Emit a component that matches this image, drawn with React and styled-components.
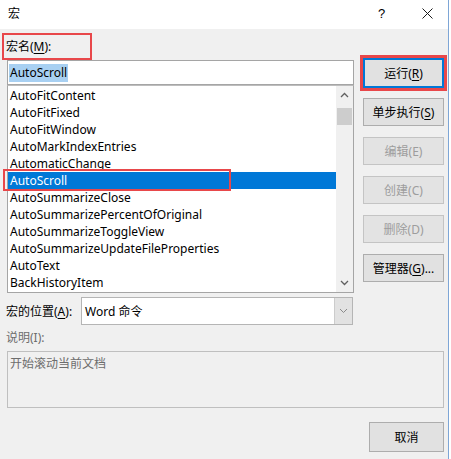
import React from 'react'
import styled, { createGlobalStyle } from 'styled-components'

const macros = [
  'AutoFitContent',
  'AutoFitFixed',
  'AutoFitWindow',
  'AutoMarkIndexEntries',
  'AutomaticChange',
  'AutoScroll',
  'AutoSummarizeClose',
  'AutoSummarizePercentOfOriginal',
  'AutoSummarizeToggleView',
  'AutoSummarizeUpdateFileProperties',
  'AutoText',
  'BackHistoryItem',
]

const selectedMacro = 'AutoScroll'

const actions = [
  { label: '单步执行', key: 'S' },
  { label: '编辑', key: 'E', disabled: true },
  { label: '创建', key: 'C', disabled: true },
  { label: '删除', key: 'D', disabled: true },
  { label: '管理器', key: 'G', suffix: '...' },
]

export default function App() {
  return (
    <>
      <GlobalStyle />
      <Dialog>
        <TitleBar>
          <Title>宏</Title>
          <TitleButtons>
            <HelpGlyph>?</HelpGlyph>
            <CloseGlyph width="11" height="11" viewBox="0 0 11 11">
              <path d="M0.5 0.5 L10.5 10.5 M10.5 0.5 L0.5 10.5" stroke="#1a1a1a" strokeWidth="1" />
            </CloseGlyph>
          </TitleButtons>
        </TitleBar>

        <Body>
          <TopRow>
            <LeftColumn>
              <LabelRow>
                <NameLabel>
                  宏名(<u>M</u>):
                </NameLabel>
              </LabelRow>
              <NameInput>
                <Selection>{selectedMacro}</Selection>
              </NameInput>
              <MacroList>
                <Items>
                  {macros.map((name) => (
                    <Item key={name} selected={name === selectedMacro}>
                      {name}
                      {name === selectedMacro && <Marker />}
                    </Item>
                  ))}
                </Items>
                <Scrollbar>
                  <Arrow width="9" height="6" viewBox="0 0 9 6">
                    <path d="M1 5 L4.5 1.5 L8 5" fill="none" stroke="#606060" strokeWidth="1.3" />
                  </Arrow>
                  <Track>
                    <Thumb />
                  </Track>
                  <Arrow width="9" height="6" viewBox="0 0 9 6">
                    <path d="M1 1 L4.5 4.5 L8 1" fill="none" stroke="#606060" strokeWidth="1.3" />
                  </Arrow>
                </Scrollbar>
              </MacroList>
            </LeftColumn>

            <ButtonColumn>
              <RunButton>
                运行(<u>R</u>)
              </RunButton>
              {actions.map((action) => (
                <Button key={action.key} disabled={action.disabled}>
                  {action.label}(
                  {action.disabled ? action.key : <u>{action.key}</u>})
                  {action.suffix}
                </Button>
              ))}
            </ButtonColumn>
          </TopRow>

          <LocationRow>
            <LocationLabel>
              宏的位置(<u>A</u>):
            </LocationLabel>
            <Select>
              <SelectValue>Word 命令</SelectValue>
              <SelectToggle>
                <svg width="9" height="6" viewBox="0 0 9 6">
                  <path d="M1 1 L4.5 4.5 L8 1" fill="none" stroke="#8a8a8a" strokeWidth="1" />
                </svg>
              </SelectToggle>
            </Select>
          </LocationRow>

          <DescLabel>说明(I):</DescLabel>
          <DescBox>开始滚动当前文档</DescBox>

          <Footer>
            <CancelButton>取消</CancelButton>
          </Footer>
        </Body>
      </Dialog>
    </>
  )
}

const GlobalStyle = createGlobalStyle`
  html, body {
    margin: 0;
    padding: 0;
    background: #ffffff;
  }
  body {
    font-family: "Noto Sans", "Noto Sans CJK SC", sans-serif;
    font-size: 12px;
    color: #000;
  }
  u {
    text-decoration-thickness: 1px;
    text-underline-offset: 2px;
  }
`

const Dialog = styled.div`
  width: 449px;
  height: 459px;
  box-sizing: border-box;
  border-right: 1px solid #7ea6d6;
  background: #f0f0f0;
  display: flex;
  flex-direction: column;
`

const TitleBar = styled.div`
  height: 29px;
  flex: none;
  background: #ffffff;
  display: flex;
  align-items: center;
  justify-content: space-between;
  padding: 0 0 3px 8px;
  box-sizing: border-box;
`

const Title = styled.span`
  font-size: 12px;
`

const TitleButtons = styled.div`
  display: flex;
  align-items: center;
`

const HelpGlyph = styled.span`
  font-family: "Liberation Sans", sans-serif;
  font-size: 13px;
  width: 10px;
  margin-right: 34px;
`

const CloseGlyph = styled.svg`
  margin-right: 15px;
  display: block;
`

const Body = styled.div`
  flex: 1;
  display: flex;
  flex-direction: column;
  padding: 0 4px 0 7px;
`

const TopRow = styled.div`
  display: flex;
  gap: 9px;
`

const LeftColumn = styled.div`
  width: 347px;
  display: flex;
  flex-direction: column;
`

const LabelRow = styled.div`
  height: 31px;
  padding-top: 4px;
  box-sizing: border-box;
`

const NameLabel = styled.div`
  width: 90px;
  height: 27px;
  margin-left: -5px;
  box-sizing: border-box;
  border: 2px solid #e8474a;
  padding-left: 2px;
  line-height: 23px;
`

const NameInput = styled.div`
  height: 25px;
  box-sizing: border-box;
  border: 1px solid #a5a5a5;
  background: #ffffff;
  padding-left: 1px;
  display: flex;
  align-items: center;
`

const Selection = styled.span`
  background: #a8d0f2;
  line-height: 18px;
  padding: 0 1px;
`

const MacroList = styled.div`
  height: 208px;
  box-sizing: border-box;
  border: 1px solid #a5a5a5;
  border-top-color: #bdbdbd;
  background: #ffffff;
  display: flex;
`

const Items = styled.div`
  flex: 1;
  padding-top: 1px;
`

const Item = styled.div`
  position: relative;
  height: 17px;
  line-height: 17px;
  padding-left: 2px;
  white-space: nowrap;
  background: ${(p) => (p.selected ? '#0078d7' : 'transparent')};
  color: ${(p) => (p.selected ? '#ffffff' : '#000000')};
`

const Marker = styled.span`
  position: absolute;
  left: -5px;
  top: -3px;
  width: 228px;
  height: 22px;
  box-sizing: border-box;
  border: 2px solid #e8474a;
`

const Scrollbar = styled.div`
  width: 17px;
  background: #f0f0f0;
  display: flex;
  flex-direction: column;
  align-items: center;
`

const Arrow = styled.svg`
  display: block;
  margin: 6px 0;
  flex: none;
`

const Track = styled.div`
  flex: 1;
  width: 100%;
  padding-top: 4px;
`

const Thumb = styled.div`
  height: 17px;
  margin: 0 1px;
  background: #cdcdcd;
`

const ButtonColumn = styled.div`
  width: 81px;
  padding-top: 29px;
  display: flex;
  flex-direction: column;
  gap: 11px;
`

const Button = styled.div`
  height: 28px;
  box-sizing: border-box;
  border: 1px solid ${(p) => (p.disabled ? '#c4c4c4' : '#adadad')};
  background: ${(p) => (p.disabled ? '#e3e3e3' : '#e1e1e1')};
  color: ${(p) => (p.disabled ? '#9d9d9d' : '#000000')};
  display: flex;
  align-items: center;
  justify-content: center;
  white-space: nowrap;
`

const RunButton = styled(Button)`
  height: 30px;
  margin-bottom: -1px;
  border: 2px solid #0078d7;
  outline: 3px solid #e8474a;
  outline-offset: 0px;
`

const LocationRow = styled.div`
  margin-top: 4px;
  height: 28px;
  display: flex;
  align-items: center;
`

const LocationLabel = styled.div`
  width: 75px;
  margin-left: -1px;
  white-space: nowrap;
`

const Select = styled.div`
  width: 272px;
  height: 28px;
  box-sizing: border-box;
  border: 1px solid #b5b5b5;
  background: #ffffff;
  display: flex;
`

const SelectValue = styled.div`
  flex: 1;
  padding-left: 3px;
  display: flex;
  align-items: center;
`

const SelectToggle = styled.div`
  width: 17px;
  background: #e2e2e2;
  border-left: 1px solid #cccccc;
  display: flex;
  align-items: center;
  justify-content: center;
`

const DescLabel = styled.div`
  height: 26px;
  line-height: 26px;
  margin-left: -1px;
  color: #6d6d6d;
`

const DescBox = styled.div`
  height: 57px;
  box-sizing: border-box;
  border: 1px solid #bfbfbf;
  padding: 4px 2px;
  line-height: 16px;
  color: #6d6d6d;
`

const Footer = styled.div`
  display: flex;
  justify-content: flex-end;
  margin-top: 14px;
`

const CancelButton = styled(Button)`
  width: 75px;
  height: 30px;
`
